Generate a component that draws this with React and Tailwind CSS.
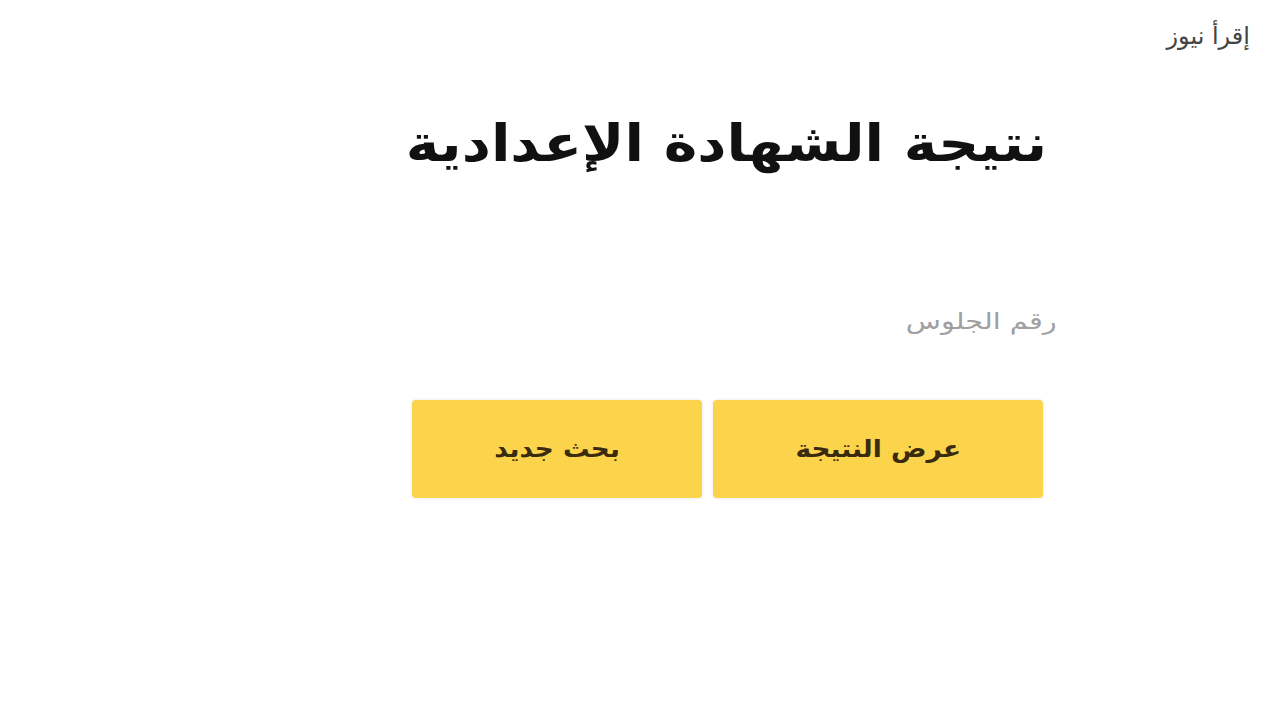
export default function App() {
  return (
    <div dir="rtl" className="relative w-[1280px] h-[720px] bg-white overflow-hidden" style={{ fontFamily: '"DejaVu Sans", sans-serif' }}>
      <div className="absolute top-[24px] right-[30px] text-[24px] text-[#444] leading-none">إقرأ نيوز</div>
      <div className="flex flex-col items-start pr-[233px] pt-[118px]">
        <h1 className="text-[51px] font-bold text-[#111] leading-none scale-x-[1.115] origin-right">نتيجة الشهادة الإعدادية</h1>
        <div className="mt-[141px] mr-[-10px] text-[23px] text-[#a0a0a0] leading-none scale-x-[1.25] origin-right">رقم الجلوس</div>
        <div className="mt-[67px] mr-[4px] flex gap-[11px]">
          <button className="w-[330px] h-[98px] rounded-[4px] bg-[#fcd44c] text-[#3a2a0e] shadow-[0_0_3px_rgba(0,0,0,0.12)] flex items-center justify-center">
            <span className="text-[24px] font-bold scale-x-[1.1]">عرض النتيجة</span>
          </button>
          <button className="w-[290px] h-[98px] rounded-[4px] bg-[#fcd44c] text-[#3a2a0e] shadow-[0_0_3px_rgba(0,0,0,0.12)] flex items-center justify-center">
            <span className="text-[24px] font-bold scale-x-[1.1]">بحث جديد</span>
          </button>
        </div>
      </div>
    </div>
  );
}
